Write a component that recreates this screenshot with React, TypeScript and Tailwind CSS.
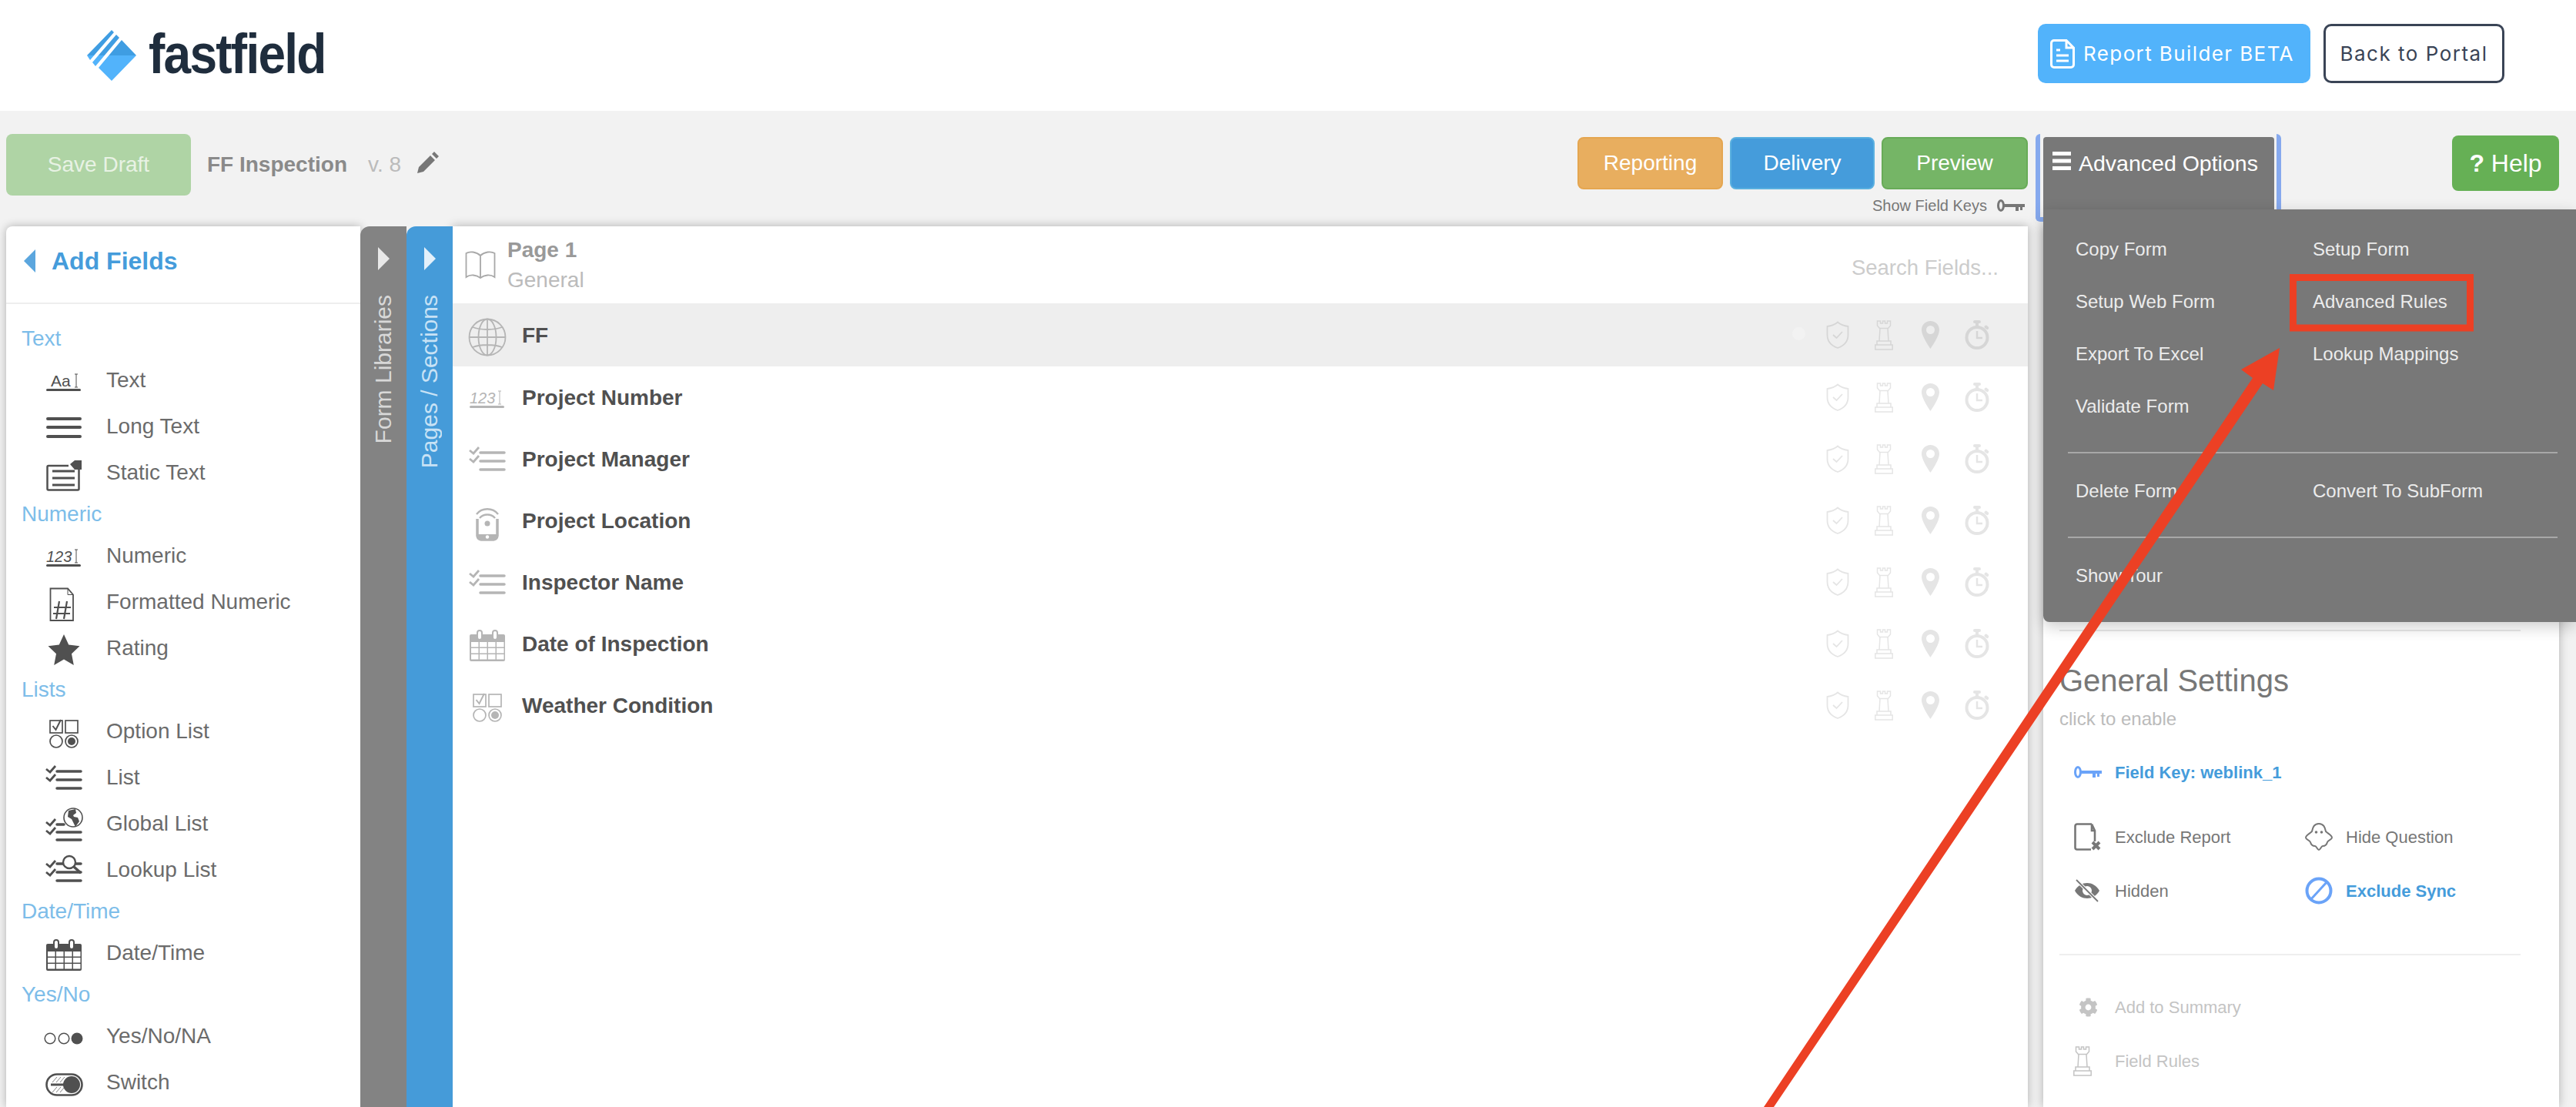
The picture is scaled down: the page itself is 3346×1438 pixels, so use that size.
import React from "react";
import { FaCog } from "react-icons/fa";

type IconProps = { className?: string };

const Box = ({ className, children, w = 46, h = 46 }: IconProps & { children: React.ReactNode; w?: number; h?: number }) => (
  <svg viewBox={`0 0 ${w} ${h}`} width={w} height={h} overflow="visible" className={`shrink-0 ${className ?? ""}`}>
    {children}
  </svg>
);

const Cursor = ({ x, y1, y2 }: { x: number; y1: number; y2: number }) => (
  <path d={`M${x - 2} ${y1}h4M${x} ${y1}V${y2}M${x - 2} ${y2}h4`} stroke="currentColor" strokeWidth="1" fill="none" />
);

const TextIcon = ({ className }: IconProps) => (
  <Box className={className}>
    <text x="6" y="31" fontSize="21" fill="currentColor" fontFamily="Liberation Sans, sans-serif">Aa</text>
    <Cursor x={39} y1={15} y2={32} />
    <rect x="0" y="34" width="45" height="3" rx="1.5" fill="currentColor" />
  </Box>
);
const NumIcon = ({ className }: IconProps) => (
  <Box className={className}>
    <text x="0" y="31" fontSize="20" fontStyle="italic" fill="currentColor" fontFamily="Liberation Sans, sans-serif">123</text>
    <Cursor x={39} y1={15} y2={32} />
    <rect x="0" y="34" width="45" height="3" rx="1.5" fill="currentColor" />
  </Box>
);
const LongIcon = ({ className }: IconProps) => (
  <Box className={className}>
    <path d="M2 13h42M2 24h42M2 36h42" stroke="currentColor" strokeWidth="4" strokeLinecap="round" />
  </Box>
);
const StaticIcon = ({ className }: IconProps) => (
  <Box className={className}>
    <path d="M29 14H3a1.5 1.5 0 0 0-1.500 1.500V44A1.500 1.500 0 0 0 3 45.500H41a1.500 1.500 0 0 0 1.500-1.500V19" fill="none" stroke="currentColor" strokeWidth="2.500" />
    <path d="M8 21h29M8 30h29M8 39h29" stroke="currentColor" strokeWidth="3" />
    <path d="M31 12l6-5h9v12H37z" fill="currentColor" />
  </Box>
);
const HashIcon = ({ className }: IconProps) => (
  <Box className={className}>
    <path d="M5.500 5.500H28l7 8V47H5.500z" fill="none" stroke="currentColor" strokeWidth="1.800" />
    <path d="M28 5.500v8h7" fill="none" stroke="currentColor" strokeWidth="1" />
    <path d="M17 22l-4 23M27 22l-4 23M10 30h22M9 38h22" stroke="currentColor" strokeWidth="2.200" fill="none" />
  </Box>
);
const StarIcon = ({ className }: IconProps) => (
  <Box className={className}>
    <path d="M23 5l6.200 13.500 14.300 1.700-10.500 10 2.800 14.800L23 37.600 10.200 45 13 30.200l-10.500-10 14.300-1.700z" fill="currentColor" />
  </Box>
);
const OptionIcon = ({ className }: IconProps) => (
  <Box className={className}>
    <rect x="5" y="9" width="16" height="16" fill="none" stroke="currentColor" strokeWidth="1.700" />
    <rect x="25" y="9" width="16" height="16" fill="none" stroke="currentColor" strokeWidth="1.700" />
    <path d="M8.500 16l4 5L19 8" fill="none" stroke="currentColor" strokeWidth="2" />
    <circle cx="13" cy="36" r="8" fill="none" stroke="currentColor" strokeWidth="1.700" />
    <circle cx="33" cy="36" r="8" fill="none" stroke="currentColor" strokeWidth="1.700" />
    <circle cx="33" cy="36" r="5" fill="currentColor" />
  </Box>
);
const Checks = ({ dy = 0 }: { dy?: number }) => (
  <path d={`M0 ${12 + dy}l5 4 7-8M0 ${23 + dy}l5 4 7-8`} fill="none" stroke="currentColor" strokeWidth="2.800" />
);
const ListIcon = ({ className }: IconProps) => (
  <Box className={className}>
    <Checks />
    <path d="M14 15h31M14 26h31M14 37h31" stroke="currentColor" strokeWidth="3.500" strokeLinecap="round" />
  </Box>
);
const GlobalListIcon = ({ className }: IconProps) => (
  <Box className={className}>
    <Checks dy={9} />
    <path d="M14 24h9M14 34h31M14 44h31" stroke="currentColor" strokeWidth="3.500" strokeLinecap="round" />
    <circle cx="35" cy="15" r="12" fill="#fff" stroke="currentColor" strokeWidth="1.600" />
    <path d="M29 6l9-2 1 5-4 3 1 2 5 1 2 5-5 7-3-6-2-4-5-3z" fill="currentColor" />
  </Box>
);
const LookupIcon = ({ className }: IconProps) => (
  <Box className={className}>
    <Checks dy={3} />
    <path d="M14 15h8M38 15h7M14 26h31M14 37h31" stroke="currentColor" strokeWidth="3.500" strokeLinecap="round" />
    <circle cx="30" cy="13" r="8" fill="#fff" stroke="currentColor" strokeWidth="2.400" />
    <path d="M36 19l9 8" stroke="currentColor" strokeWidth="3.500" />
  </Box>
);
const CalIcon = ({ className }: IconProps) => (
  <Box className={className}>
    <rect x="0" y="11" width="46" height="35" rx="2" fill="currentColor" />
    <g fill="#fff">
      {[2, 13, 24, 35].map((x) =>
        [21, 29, 37].map((y) => <rect key={`${x}-${y}`} x={x} y={y} width="9.500" height="6.500" />)
      )}
    </g>
    <rect x="10" y="6" width="6" height="12" rx="3" fill="#fff" stroke="currentColor" strokeWidth="2" />
    <rect x="30" y="6" width="6" height="12" rx="3" fill="#fff" stroke="currentColor" strokeWidth="2" />
  </Box>
);
const YnIcon = ({ className }: IconProps) => (
  <Box className={className}>
    <circle cx="5" cy="26" r="6.800" fill="none" stroke="currentColor" strokeWidth="1.500" />
    <circle cx="23" cy="26" r="6.800" fill="none" stroke="currentColor" strokeWidth="1.500" />
    <circle cx="40" cy="26" r="7.500" fill="currentColor" />
  </Box>
);
const SwitchIcon = ({ className }: IconProps) => (
  <Box className={className}>
    <rect x="0.500" y="12.500" width="46" height="27" rx="13.500" fill="none" stroke="currentColor" strokeWidth="2.600" />
    <path d="M6 26h26" stroke="currentColor" strokeWidth="3" />
    <path d="M8 23l6-7M13 23l6-7M18 23l6-7M8 36l6-7M13 36l6-7M18 36l6-7" stroke="currentColor" strokeWidth="1" opacity=".7" />
    <circle cx="33" cy="26" r="11" fill="currentColor" />
  </Box>
);
const GlobeIcon = ({ className }: IconProps) => (
  <Box className={className}>
    <g transform="translate(0 3)" fill="none" stroke="currentColor" strokeWidth="1.800">
      <circle cx="23" cy="23" r="23.500" />
      <ellipse cx="23" cy="23" rx="11.500" ry="23.500" />
      <path d="M23 0v46M0 23h46M4 10c10 4 28 4 38 0M4 36c10-4 28-4 38 0" />
    </g>
  </Box>
);
const PhoneIcon = ({ className }: IconProps) => (
  <Box className={className}>
    <path d="M9 15c7-9 21-9 28 0M13 20c5-6 15-6 20 0" fill="none" stroke="currentColor" strokeWidth="2.400" />
    <circle cx="23" cy="27" r="3.500" fill="currentColor" />
    <path d="M10 21v22a6 6 0 0 0 5 5h16a6 6 0 0 0 5-5V21" fill="none" stroke="currentColor" strokeWidth="3.500" />
    <path d="M10 41h26v3a5 5 0 0 1-5 5H15a5 5 0 0 1-5-5z" fill="currentColor" />
    <circle cx="23" cy="44.500" r="2.200" fill="#fff" />
  </Box>
);
const BookIcon = ({ className }: IconProps) => (
  <Box w={40} h={36} className={className}>
    <path d="M20 6C15 1 6 0 1.500 3v31C7 30 15 31 20 35c5-4 13-5 18.500-1V3C34 0 25 1 20 6zM20 6v29" fill="none" stroke="currentColor" strokeWidth="1.800" />
  </Box>
);
const Shield = () => (
  <Box w={30} h={36}>
    <path d="M15 1.500C11 5 6 6.500 1.500 7v11C1.500 27 8 32.500 15 35c7-2.500 13.500-8 13.500-17V7C24 6.500 19 5 15 1.500z" fill="none" stroke="currentColor" strokeWidth="1.800" />
    <path d="M9 18l4.500 4L21 14" fill="none" stroke="currentColor" strokeWidth="1.800" />
  </Box>
);
const Rook = ({ className }: IconProps) => (
  <Box w={24} h={39} className={className}>
    <path d="M3.500 1h4v3h3V1h3v3h3V1h4v6l-3 3.500H6.500l-3-3.500zM7 10.500L6 27h12l-1-16.500M3 27h18v5H3zM.8 32h22.400v6H.8z" fill="none" stroke="currentColor" strokeWidth="1.500" />
  </Box>
);
const Pin = () => (
  <Box w={23} h={36}>
    <path fillRule="evenodd" d="M11.500 0C5 0 0 5 0 11.500 0 20 11.500 36 11.500 36S23 20 23 11.500C23 5 18 0 11.500 0zm0 6a5.500 5.500 0 1 1 0 11 5.500 5.500 0 0 1 0-11z" fill="currentColor" />
  </Box>
);
const Timer = () => (
  <Box w={32} h={38}>
    <circle cx="16" cy="22.500" r="13.500" fill="none" stroke="currentColor" strokeWidth="4" />
    <rect x="11" y="0" width="10" height="4" rx="2" fill="currentColor" />
    <rect x="14" y="3" width="4" height="6" fill="currentColor" />
    <rect x="25.500" y="7" width="6" height="4" rx="1.500" transform="rotate(40 28 9)" fill="currentColor" />
    <path d="M16 14v9h7" fill="none" stroke="currentColor" strokeWidth="2.500" />
  </Box>
);
const KeyIcon = ({ className }: IconProps) => (
  <Box w={36} h={18} className={className}>
    <ellipse cx="5" cy="9" rx="3.500" ry="6.500" fill="none" stroke="currentColor" strokeWidth="3" />
    <path d="M8 7h28v4H8zM24 11h4v5h-4zM30 11h3v4h-3z" fill="currentColor" />
  </Box>
);
const Triangle = ({ className }: IconProps) => (
  <svg viewBox="0 0 15 30" width="15" height="30" className={`shrink-0 ${className ?? ""}`}>
    <path d="M0 0l15 15L0 30z" fill="currentColor" />
  </svg>
);
const FileX = () => (
  <Box w={36} h={36}>
    <path d="M23 1.500H4A2.500 2.500 0 0 0 1.500 4v28A2.500 2.500 0 0 0 4 34.500h18M23 1.500L27 10v14M23 1.500V10h4" fill="none" stroke="currentColor" strokeWidth="2.600" />
    <path d="M24 25l9 9M33 25l-9 9" stroke="currentColor" strokeWidth="4" />
  </Box>
);
const Ghost = () => (
  <Box w={36} h={36}>
    <path d="M18 1C11 1 10 7 9 11 6 14 1 16 1 19c0 3 5 3 6 6 1 4 3 5 6 5 2 0 3 5 5 5s3-5 5-5c3 0 5-1 6-5 1-3 6-3 6-6 0-3-5-5-8-8-1-4-2-10-9-10z" fill="none" stroke="currentColor" strokeWidth="2" />
    <circle cx="14.500" cy="12" r="1.800" fill="currentColor" />
    <circle cx="21.500" cy="12" r="1.800" fill="currentColor" />
  </Box>
);
const EyeOff = () => (
  <Box w={36} h={30}>
    <path fillRule="evenodd" d="M1 15C5 8 11 5 17 5s12 3 16 10c-4 7-10 10-16 10S5 22 1 15zm16-6a6 6 0 1 0 0 12 6 6 0 0 0 0-12z" fill="currentColor" />
    <path d="M3 1l28 28" stroke="#fff" strokeWidth="4" />
    <path d="M3 1l28 28" stroke="currentColor" strokeWidth="1.800" />
  </Box>
);
const Ban = () => (
  <Box w={36} h={36}>
    <circle cx="18" cy="18" r="15.500" fill="none" stroke="currentColor" strokeWidth="4" />
    <path d="M7 30L29 6" stroke="currentColor" strokeWidth="3" />
  </Box>
);
const Pencil = () => (
  <svg viewBox="0 0 28 28" width="28" height="28" className="shrink-0 text-[#777777]">
    <path d="M0 28l2-8L17 5l6 6L8 26zM19 3l3-3 6 6-3 3z" fill="currentColor" />
  </svg>
);
const DocIcon = () => (
  <svg viewBox="0 0 32 38" width="32" height="38" className="shrink-0 text-white">
    <path d="M21 1.500H5A3.500 3.500 0 0 0 1.500 5v28A3.500 3.500 0 0 0 5 36.500h22a3.500 3.500 0 0 0 3.500-3.500V11zM21 1.500V11h9.500" fill="none" stroke="currentColor" strokeWidth="3" />
    <path d="M8 14h5M8 21h16M8 28h16" stroke="currentColor" strokeWidth="3" />
  </svg>
);
const Logo = () => (
  <svg viewBox="0 0 64 66" width="64" height="66" className="shrink-0">
    <defs>
      <linearGradient id="lg" x1="0" y1="0" x2="0" y2="1">
        <stop offset="0.5" stopColor="#3f9de2" />
        <stop offset="0.5" stopColor="#52b3fb" />
      </linearGradient>
    </defs>
    <path d="M32 0l3 3L4 39l-4-6zM38 6l4 4L11 47l-4-5zM45 13l19 20-32 33-17-17z" fill="url(#lg)" />
  </svg>
);

const sections = [
  {
    title: "Text",
    items: [
      { label: "Text", Icon: TextIcon },
      { label: "Long Text", Icon: LongIcon },
      { label: "Static Text", Icon: StaticIcon },
    ],
  },
  {
    title: "Numeric",
    items: [
      { label: "Numeric", Icon: NumIcon },
      { label: "Formatted Numeric", Icon: HashIcon },
      { label: "Rating", Icon: StarIcon },
    ],
  },
  {
    title: "Lists",
    items: [
      { label: "Option List", Icon: OptionIcon },
      { label: "List", Icon: ListIcon },
      { label: "Global List", Icon: GlobalListIcon },
      { label: "Lookup List", Icon: LookupIcon },
    ],
  },
  { title: "Date/Time", items: [{ label: "Date/Time", Icon: CalIcon }] },
  {
    title: "Yes/No",
    items: [
      { label: "Yes/No/NA", Icon: YnIcon },
      { label: "Switch", Icon: SwitchIcon },
    ],
  },
];

const fields = [
  { label: "FF", Icon: GlobeIcon },
  { label: "Project Number", Icon: NumIcon },
  { label: "Project Manager", Icon: ListIcon },
  { label: "Project Location", Icon: PhoneIcon },
  { label: "Inspector Name", Icon: ListIcon },
  { label: "Date of Inspection", Icon: CalIcon },
  { label: "Weather Condition", Icon: OptionIcon },
];

const ToolButton = ({ label, className }: { label: string; className: string }) => (
  <button className={`h-[68px] rounded-lg border-2 text-[28px] text-white flex items-center justify-center ${className}`}>
    {label}
  </button>
);

const MenuItem = ({ label }: { label: string }) => (
  <div className="h-[68px] flex items-center text-[24px] text-[#ececec]">{label}</div>
);

const Setting = ({ icon, label, className }: { icon: React.ReactNode; label: string; className: string }) => (
  <div className={`h-[60px] flex items-center text-[22px] ${className}`}>
    <div className="w-[36px] flex justify-center">{icon}</div>
    <span className="ml-[17px]">{label}</span>
  </div>
);

export default function App() {
  return (
    <div className="relative w-[3346px] h-[1438px] overflow-hidden bg-[#f2f2f2] flex flex-col font-['Liberation_Sans',Arial,sans-serif]">
      <header className="h-[144px] shrink-0 bg-white flex items-center justify-between pl-[113px] pr-[93px]">
        <div className="flex items-center">
          <Logo />
          <span className="ml-[16px] text-[72px] leading-none font-bold text-[#1f2d3d] tracking-[-2px] origin-left scale-x-[0.89] -mt-[4px]">
            fastfield
          </span>
        </div>
        <div className="flex gap-[17px] -mt-[5px] font-['Inter',sans-serif] text-[26px]">
          <button className="w-[354px] h-[77px] rounded-[10px] bg-[#52b3fb] text-white flex items-center pl-[16px] gap-[11px] tracking-[1.400px]">
            <DocIcon />
            Report Builder BETA
          </button>
          <button className="w-[235px] h-[77px] rounded-[10px] border-[3px] border-[#3a4456] text-[#3a4456] bg-white flex items-center justify-center tracking-[1.500px]">
            Back to Portal
          </button>
        </div>
      </header>

      <div className="h-[150px] shrink-0 flex items-start pl-[8px] pt-[30px]">
        <button className="w-[240px] h-[80px] rounded-lg bg-[#afd4a5] text-[#e8f2e4] text-[28px]">Save Draft</button>
        <div className="ml-[21px] h-[80px] flex items-center text-[28px]">
          <span className="font-bold text-[#8a8a8a]">FF Inspection</span>
          <span className="ml-[27px] text-[#bbbbbb]">v. 8</span>
          <span className="ml-[21px] -mt-[6px]"><Pencil /></span>
        </div>

        <div className="ml-auto mt-[4px] w-[585px] flex flex-col">
          <div className="flex gap-[9px]">
            <ToolButton label="Reporting" className="w-[189px] bg-[#e8ae5f] border-[#e5a650]" />
            <ToolButton label="Delivery" className="w-[188px] bg-[#459cdb] border-[#5ab0e0]" />
            <ToolButton label="Preview" className="w-[190px] bg-[#75b566] border-[#68ab58]" />
          </div>
          <div className="mt-[8px] h-[26px] flex items-center justify-end pr-[4px] text-[20px] text-[#777777]">
            Show Field Keys
            <KeyIcon className="ml-[13px] text-[#777777]" />
          </div>
        </div>

        <div className="relative ml-[10px] w-[319px] h-[114px] border-x-[6px] border-b-[6px] border-[#86a9ee] rounded-[6px] pl-[4px] pr-[3px]">
          <div className="mt-[4px] h-[104px] bg-[#787878] rounded-t-[4px] flex items-start pl-[12px] pt-[13px] text-white text-[28.500px]">
            <svg viewBox="0 0 24 24" width="24" height="24" className="shrink-0 mt-[6px]">
              <path d="M0 0h24v5H0zM0 9.500h24v5H0zM0 19h24v5H0z" fill="currentColor" />
            </svg>
            <span className="ml-[10px]">Advanced Options</span>
          </div>
          <div className="absolute left-[4px] top-[98px] w-[692px] z-10 bg-[#787878] rounded-bl-lg shadow-[0_6px_20px_rgba(0,0,0,0.2)] pt-[18px] pb-[26px]">
            <div className="grid grid-cols-[308px_1fr] pl-[42px]">
              <MenuItem label="Copy Form" />
              <MenuItem label="Setup Form" />
              <MenuItem label="Setup Web Form" />
              <MenuItem label="Advanced Rules" />
              <MenuItem label="Export To Excel" />
              <MenuItem label="Lookup Mappings" />
              <MenuItem label="Validate Form" />
            </div>
            <div className="mt-[25px] mb-[15px] ml-[32px] mr-[24px] h-[2px] bg-[#a8a8a8]" />
            <div className="grid grid-cols-[308px_1fr] pl-[42px]">
              <MenuItem label="Delete Form" />
              <MenuItem label="Convert To SubForm" />
            </div>
            <div className="mt-[25px] mb-[15px] ml-[32px] mr-[24px] h-[2px] bg-[#a8a8a8]" />
            <div className="pl-[42px]">
              <MenuItem label="Show Tour" />
            </div>
          </div>
        </div>

        <button className="ml-[222px] mr-[22px] mt-[2px] w-[139px] h-[72px] rounded-lg bg-[#66b055] text-white text-[32px] shrink-0">
          <span className="font-bold">?</span> Help
        </button>
      </div>

      <div className="flex-1 min-h-0 flex pl-[8px] pr-[22px]">
        {/* Add Fields */}
        <aside className="w-[460px] shrink-0 bg-white rounded-tl-lg shadow-[0_0_12px_rgba(0,0,0,0.28)]">
          <div className="h-[101px] border-b-2 border-[#eeeeee] flex items-center pl-[23px] pb-[10px]">
            <Triangle className="text-[#5ba6de] rotate-180" />
            <span className="ml-[21px] text-[32px] font-bold text-[#459cdb]">Add Fields</span>
          </div>
          <div className="pt-[21px] pl-[20px]">
            {sections.map((s) => (
              <div key={s.title}>
                <div className="h-[48px] flex items-center text-[28px] text-[#7dbde9]">{s.title}</div>
                {s.items.map(({ label, Icon }) => (
                  <div key={label} className="h-[60px] flex items-center pl-[32px] text-[28px] text-[#6b6b6b]">
                    <Icon className="text-[#505050]" />
                    <span className="ml-[32px]">{label}</span>
                  </div>
                ))}
              </div>
            ))}
          </div>
        </aside>

        {/* Tabs */}
        <div className="w-[60px] shrink-0 bg-[#838383] rounded-tl-xl flex flex-col items-center pt-[27px] text-[#d8d8d8] z-[1]">
          <Triangle className="text-[#e8e8e8]" />
          <span className="mt-[32px] text-[30px] leading-none [writing-mode:vertical-rl] rotate-180">Form Libraries</span>
        </div>
        <div className="w-[60px] shrink-0 bg-[#459bd9] rounded-tl-xl flex flex-col items-center pt-[27px] text-[#c8e2f5] z-[1]">
          <Triangle className="text-[#e3f0fa]" />
          <span className="mt-[32px] text-[30px] leading-none [writing-mode:vertical-rl] rotate-180">Pages / Sections</span>
        </div>

        {/* Field list */}
        <main className="flex-1 min-w-0 bg-white shadow-[0_0_12px_rgba(0,0,0,0.28)]">
          <div className="h-[100px] flex items-center pl-[16px] pr-[38px]">
            <BookIcon className="text-[#a8a8a8]" />
            <div className="ml-[15px] flex flex-col gap-[9px] text-[28px] leading-[30px]">
              <span className="font-bold text-[#999999]">Page 1</span>
              <span className="text-[#bbbbbb]">General</span>
            </div>
            <span className="ml-auto mt-[8px] text-[27.500px] text-[#cccccc]">Search Fields...</span>
          </div>
          {fields.map(({ label, Icon }, i) => (
            <div
              key={label + i}
              className={`flex items-center pl-[22px] pr-[50px] ${
                i === 0 ? "h-[82px] bg-[#eeeeee] text-[#d6d6d6]" : "h-[80px] text-[#e5e5e5]"
              }`}
            >
              <Icon className="text-[#b5b5b5]" />
              <span className="ml-[22px] mt-[1px] text-[28px] font-bold text-[#505050]">{label}</span>
              <div className="ml-auto flex items-center">
                {i === 0 && <span className="w-[17px] h-[17px] rounded-full bg-[#f2f2f2] mr-[27px] -mt-[4px]" />}
                <Shield />
                <span className="ml-[33px]"><Rook /></span>
                <span className="ml-[37px]"><Pin /></span>
                <span className="ml-[33px]"><Timer /></span>
              </div>
            </div>
          ))}
        </main>

        {/* Settings */}
        <aside className="ml-[20px] w-[670px] shrink-0 bg-white shadow-[0_0_12px_rgba(0,0,0,0.28)] pl-[21px] pr-[50px] pt-[524px]">
          <div className="h-[2px] bg-[#e8e8e8]" />
          <h2 className="mt-[40px] text-[40px] leading-[48px] text-[#777777]">General Settings</h2>
          <p className="mt-[11px] text-[24px] leading-[30px] text-[#bbbbbb]">click to enable</p>
          <div className="mt-[34px] h-[40px] pl-[19px] flex items-center">
            <KeyIcon className="text-[#6aa3f8]" />
            <span className="ml-[17px] text-[22px] font-bold text-[#459cdb]">Field Key: weblink_1</span>
          </div>
          <div className="mt-[34px] pl-[19px] grid grid-cols-[300px_1fr] gap-y-[10px]">
            <Setting icon={<FileX />} label="Exclude Report" className="text-[#777777]" />
            <Setting icon={<Ghost />} label="Hide Question" className="text-[#777777]" />
            <Setting icon={<EyeOff />} label="Hidden" className="text-[#777777]" />
            <Setting icon={<Ban />} label="Exclude Sync" className="text-[#6aa3f8] font-bold [&>span]:text-[#459cdb]" />
          </div>
          <div className="mt-[52px] h-[2px] bg-[#eeeeee]" />
          <div className="mt-[37px] pl-[19px] flex flex-col gap-[10px] text-[#c4c4c4]">
            <Setting icon={<FaCog size={25} />} label="Add to Summary" className="" />
            <Setting icon={<Rook className="-ml-[14px]" />} label="Field Rules" className="" />
          </div>
        </aside>
      </div>

      {/* Annotation over the screenshot */}
      <svg viewBox="0 0 3346 1438" width="3346" height="1438" className="absolute inset-0 z-20 pointer-events-none">
        <rect x="2978.500" y="360.500" width="230" height="65.500" fill="none" stroke="#ec4024" strokeWidth="9" />
        <path d="M2961 452L2911 480L2926 491L2291 1438H2304L2939 498L2953 507z" fill="#ec4024" />
      </svg>
    </div>
  );
}
